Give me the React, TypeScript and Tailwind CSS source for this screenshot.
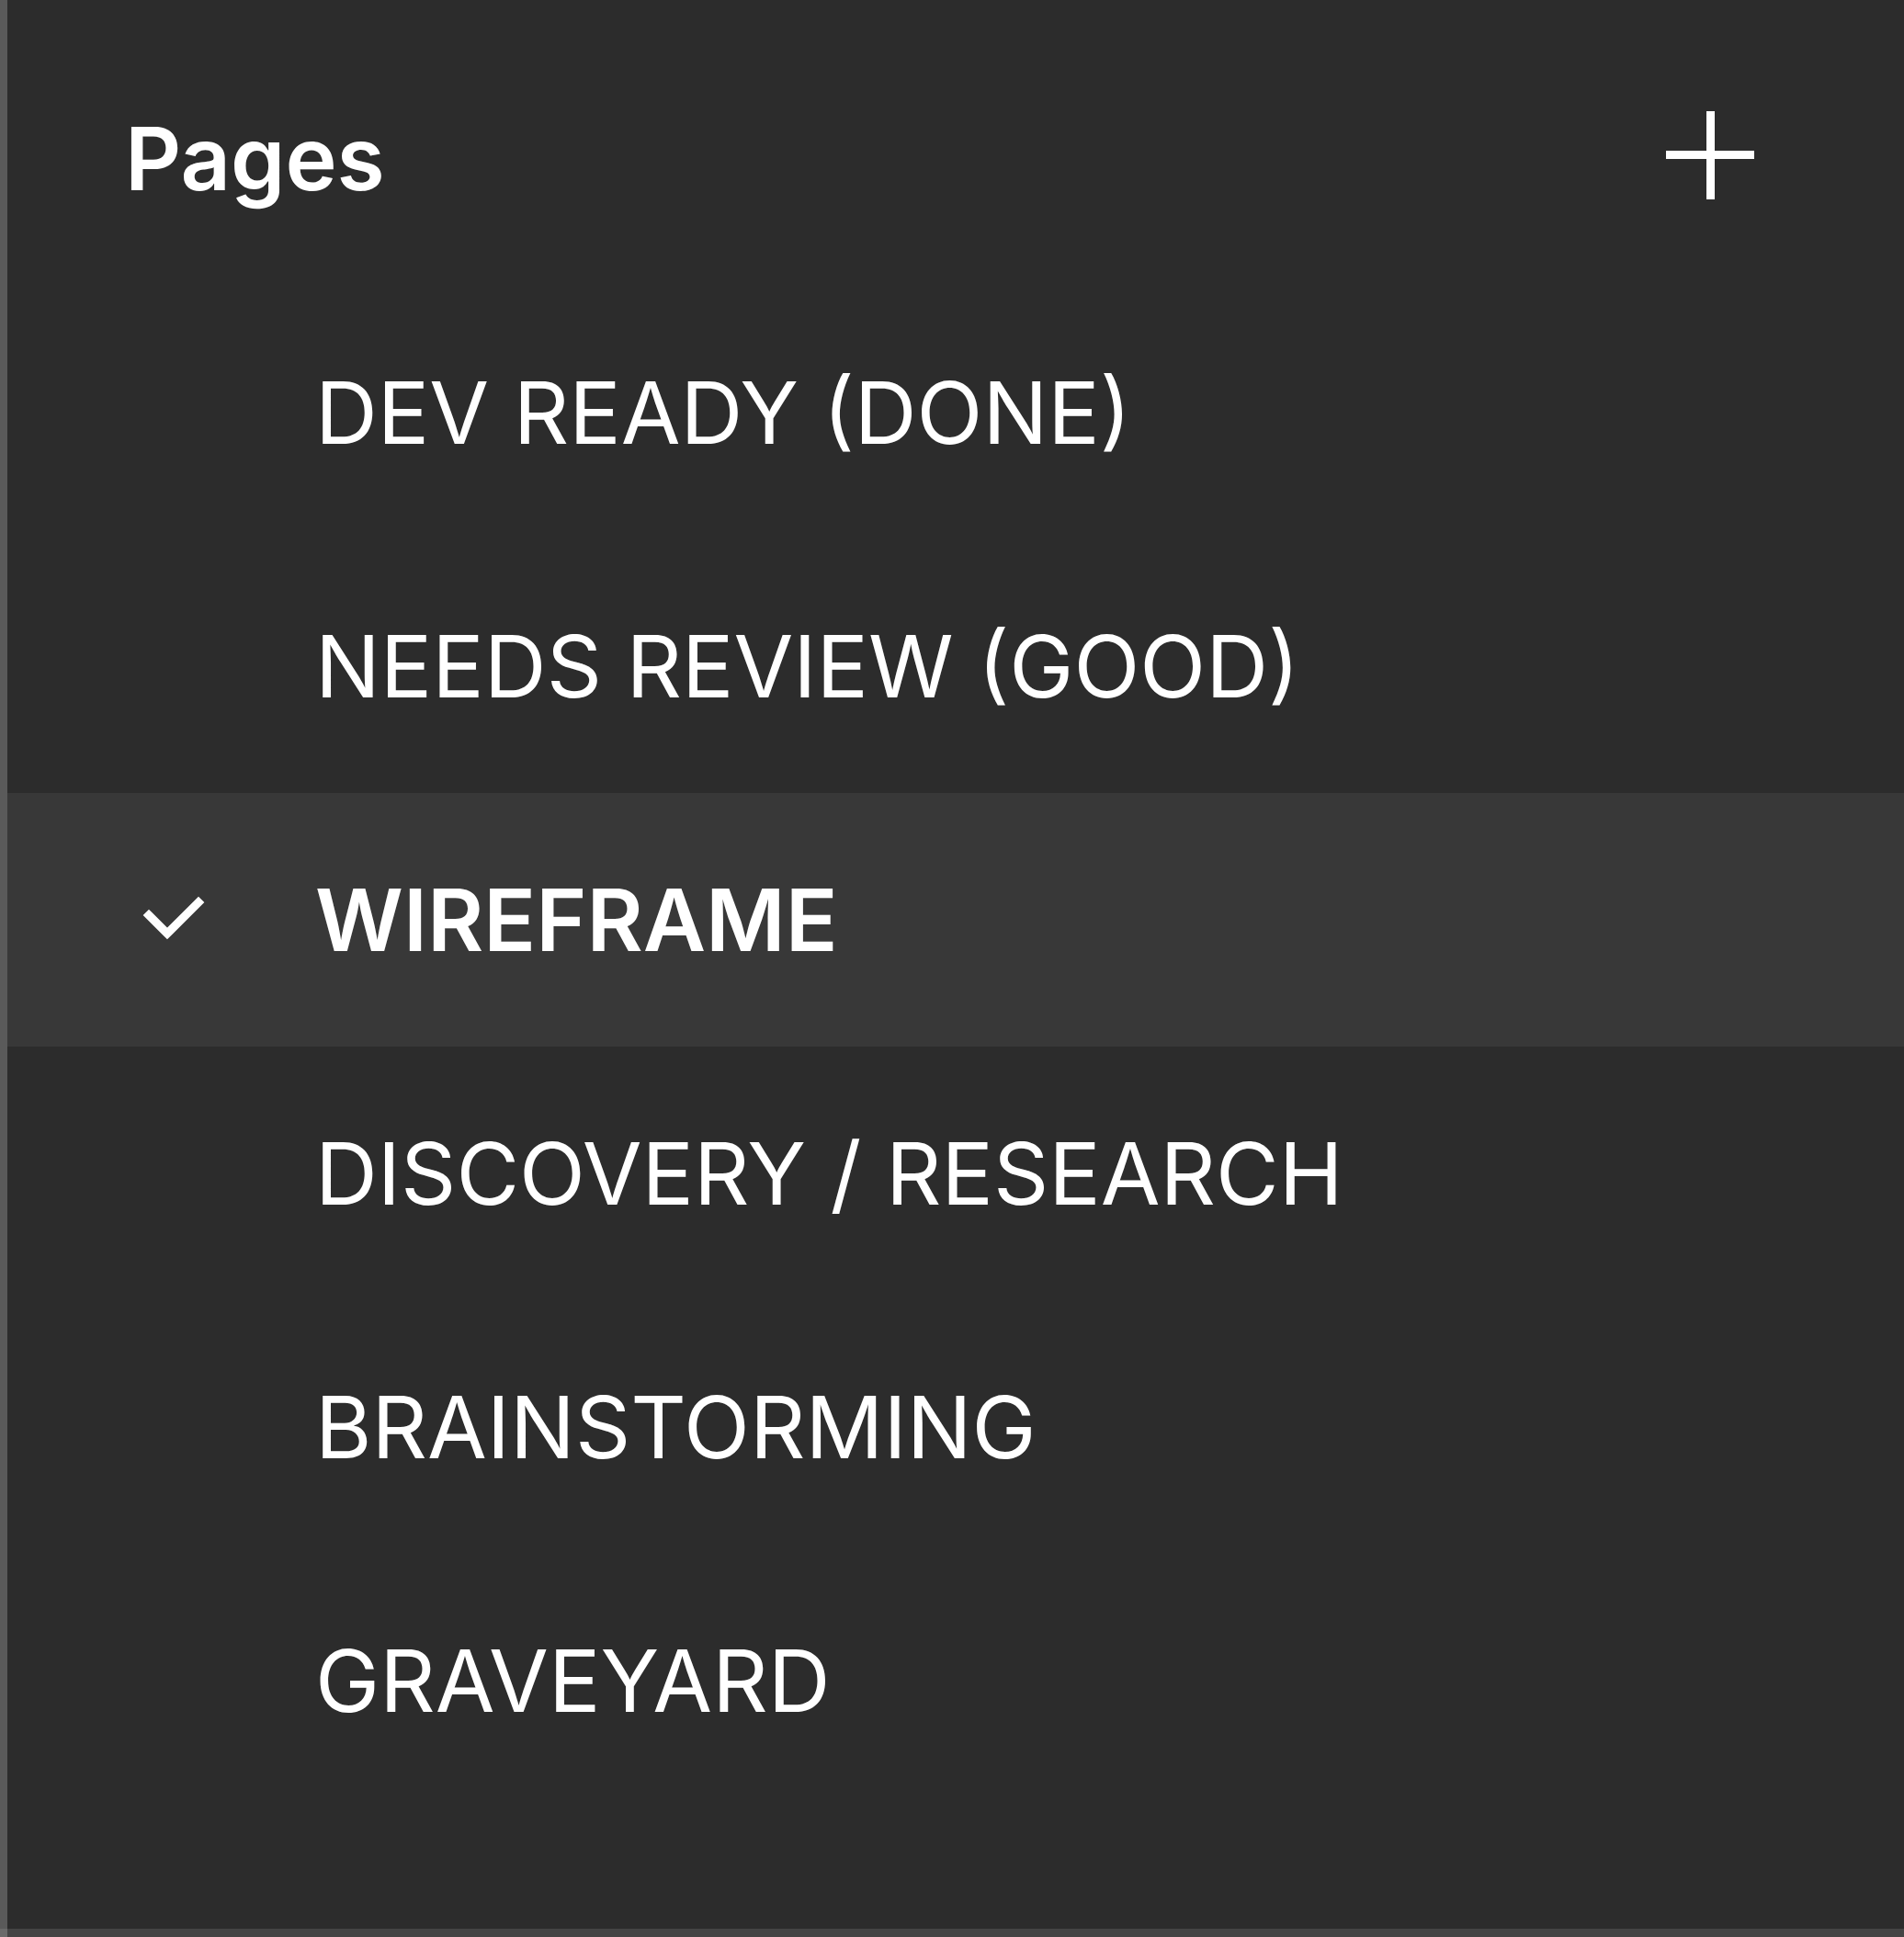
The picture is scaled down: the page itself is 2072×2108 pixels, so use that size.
import React from "react";

const pages = [
  { name: "DEV READY (DONE)" },
  { name: "NEEDS REVIEW (GOOD)" },
  { name: "WIREFRAME", current: true },
  { name: "DISCOVERY / RESEARCH" },
  { name: "BRAINSTORMING" },
  { name: "GRAVEYARD" },
];

function PlusIcon() {
  return (
    <svg width="96" height="96" viewBox="0 0 96 96" className="mt-[121px] shrink-0">
      <rect x="44" y="0" width="9" height="96" fill="#ffffff" />
      <rect x="0" y="43" width="96" height="9" fill="#ffffff" />
    </svg>
  );
}

function CheckIcon() {
  return (
    <svg width="80" height="70" viewBox="0 0 80 70">
      <polyline
        points="12,30 32,50 66,16"
        fill="none"
        stroke="#ffffff"
        strokeWidth="9"
        strokeLinecap="square"
        strokeLinejoin="miter"
      />
    </svg>
  );
}

export default function App() {
  return (
    <div
      className="flex h-[2108px] w-[2072px] bg-[#2c2c2c] text-white"
      style={{ fontFamily: "Inter, 'Liberation Sans', sans-serif" }}
    >
      {/* left edge */}
      <div className="flex w-[8px] shrink-0 flex-col">
        <div className="flex-1 bg-[#5a5a5a]" />
        <div className="h-[9px] bg-[#6a6a6a]" />
      </div>

      <div className="flex flex-1 flex-col">
        {/* header */}
        <div className="flex h-[311px] items-start justify-between pl-[128px] pr-[163px]">
          <h2 className="mt-[125px] text-[95px] font-semibold leading-none">Pages</h2>
          <PlusIcon />
        </div>

        {/* page list */}
        <ul className="flex flex-col">
          {pages.map((p) => (
            <li
              key={p.name}
              className={`flex h-[276px] items-center ${p.current ? "bg-[#383838]" : ""}`}
            >
              <div className="flex w-[335px] shrink-0 items-center pl-[142px]">
                {p.current && <CheckIcon />}
              </div>
              <span
                className={`text-[94px] leading-none whitespace-nowrap ${
                  p.current ? "font-semibold" : "font-normal"
                }`}
              >
                {p.name}
              </span>
            </li>
          ))}
        </ul>

        <div className="flex-1" />
        <div className="h-[9px] bg-[#444444]" />
      </div>
    </div>
  );
}
